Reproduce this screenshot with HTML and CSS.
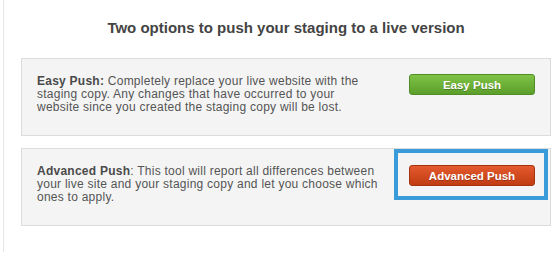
FILE: index.html
```html
<!DOCTYPE html>
<html lang="en">
   <head>
      <meta charset="UTF-8">
      <meta name="viewport" content="width=device-width, initial-scale=1.0">
      <title>Push Staging</title>
      <link rel="stylesheet" href="styles.css">
   </head>
   <body>
      <div class="panel">
         <h2>Two options to push your staging to a live version</h2>
         <div class="option">
            <p class="option-text"><strong>Easy Push:</strong> Completely replace your live website with the staging copy. Any changes that have occurred to your website since you created the staging copy will be lost.</p>
            <button class="btn btn-green">Easy Push</button>
         </div>
         <div class="option">
            <p class="option-text"><strong>Advanced Push</strong>: This tool will report all differences between your live site and your staging copy and let you choose which ones to apply.</p>
            <button class="btn btn-red highlighted">Advanced Push</button>
         </div>
      </div>
   </body>
</html>
```

FILE: styles.css
```css
body {
margin: 0;
background-color: #fff;
font-family: "Liberation Sans", Arial, sans-serif;
color: #555;
}
.panel {
margin-left: 3px;
border-left: 1px solid #e6e6e6;
padding: 1px 8px 0 17px;
height: 252px;
box-sizing: border-box;
}
h2 {
margin: 18px 0 21px 0;
font-size: 15px;
line-height: 18px;
text-align: center;
color: #444;
}
.option {
display: flex;
justify-content: space-between;
align-items: flex-start;
background-color: #f4f4f4;
border: 1px solid #dcdcdc;
padding: 15px 15px 25px 15px;
margin-bottom: 12px;
height: 78px;
box-sizing: border-box;
}
.option-text {
margin: 1px 0 0 0;
width: 342px;
font-size: 12px;
letter-spacing: 0.25px;
line-height: 13px;
}
.option-text strong {
color: #4a4a4a;
}
.btn {
width: 126px;
height: 21px;
padding: 0;
font-family: "Liberation Sans", Arial, sans-serif;
font-size: 11.5px;
font-weight: bold;
color: #fff;
border-radius: 3px;
text-shadow: 0 1px 0 rgba(0, 0, 0, 0.25);
cursor: pointer;
}
.btn-green {
background: linear-gradient(#7fc446, #5b9e2b);
border: 1px solid #4f8d25;
}
.btn-red {
margin-top: 1px;
background: linear-gradient(#e35a2d, #c13c13);
border: 1px solid #a6330f;
}
/* annotation box drawn over the option */
.highlighted {
position: relative;
}
.highlighted::after {
content: "";
position: absolute;
top: -17px;
left: -16px;
right: -14px;
bottom: -15px;
border: 4px solid #3a9bdb;
}
```
